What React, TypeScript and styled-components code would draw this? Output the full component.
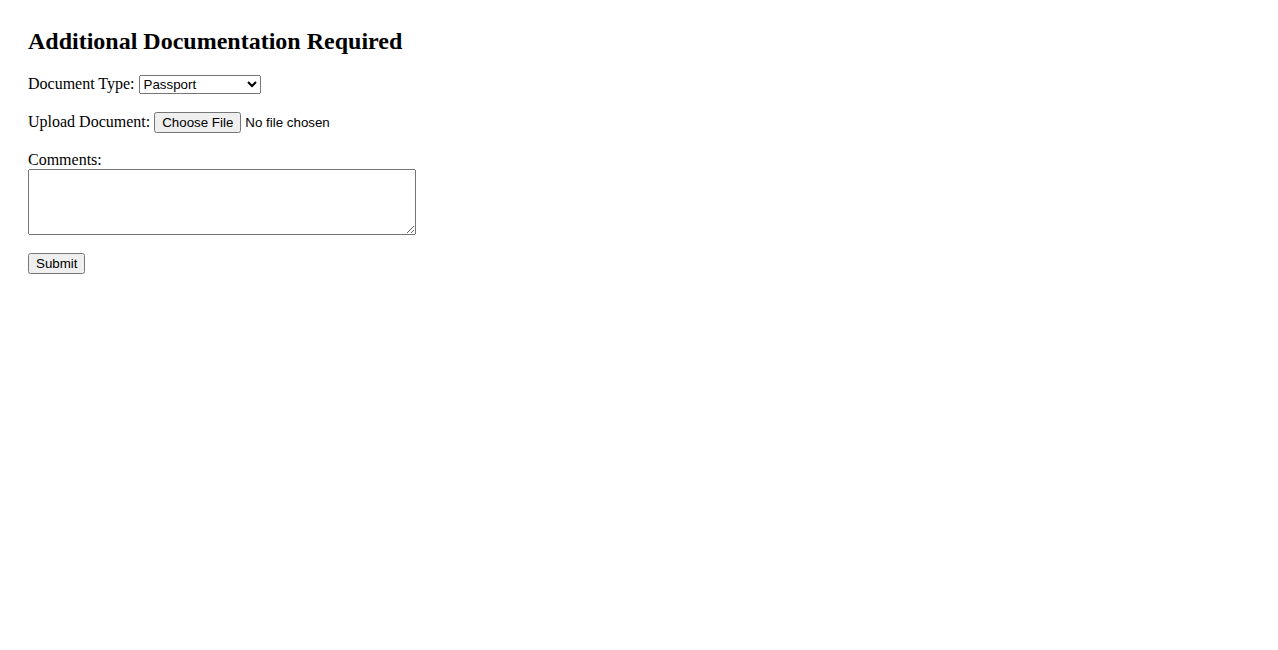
import React from 'react'
import styled, { createGlobalStyle } from 'styled-components'

const GlobalStyle = createGlobalStyle`
  body {
    margin: 8px;
    font-family: "Liberation Serif", "Times New Roman", serif;
    font-size: 16px;
    color: #000;
    background: #fff;
  }
`

const Page = styled.div`
  padding: 20px;
`

const Title = styled.h2`
  margin: 0 0 19.92px;
  font-size: 24px;
  font-weight: bold;
`

const Field = styled.div<{ $gap?: number }>`
  margin-bottom: ${p => p.$gap ?? 18}px;
`

const Label = styled.label<{ $block?: boolean }>`
  display: ${p => (p.$block ? 'block' : 'inline')};
`

const Select = styled.select`
  width: 122px;
  font-family: Arial, "Liberation Sans", sans-serif;
  font-size: 13.33px;
`

const FileInput = styled.input`
  font-family: Arial, "Liberation Sans", sans-serif;
  font-size: 13.33px;
`

const Comments = styled.textarea`
  width: 388px;
  height: 66px;
  box-sizing: border-box;
`

const SubmitButton = styled.button`
  font-family: Arial, "Liberation Sans", sans-serif;
  font-size: 13.33px;
`

export default function App() {
  return (
    <>
      <GlobalStyle />
      <Page>
        <Title>Additional Documentation Required</Title>
        <form onSubmit={e => e.preventDefault()}>
          <Field>
            <Label htmlFor="docType">Document Type: </Label>
            <Select id="docType" defaultValue="passport">
              <option value="passport">Passport</option>
              <option value="license">Driver's License</option>
              <option value="id">National ID</option>
            </Select>
          </Field>
          <Field>
            <Label htmlFor="upload">Upload Document: </Label>
            <FileInput id="upload" type="file" />
          </Field>
          <Field $gap={14}>
            <Label htmlFor="comments" $block>Comments:</Label>
            <Comments id="comments" />
          </Field>
          <SubmitButton type="submit">Submit</SubmitButton>
        </form>
      </Page>
    </>
  )
}
